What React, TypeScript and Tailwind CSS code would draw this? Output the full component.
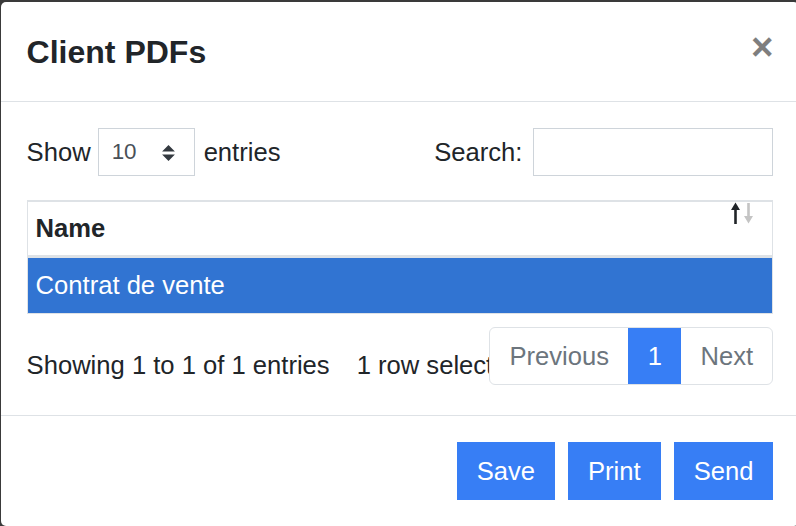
import React from "react";

export default function App() {
  const font = { fontFamily: '"Liberation Sans", Arial, Helvetica, sans-serif' };
  return (
    <div className="h-[526px] w-[796px] overflow-hidden bg-[#3a3a3a]" style={font}>
      <div className="ml-[1px] mt-[2px] w-[798px] h-[524px] rounded-[5px] bg-white text-[#212529] flex flex-col">
        {/* Header */}
        <div className="flex items-start justify-between px-[25.6px] py-[25.6px] border-b border-[#dee2e6]">
          <h5 className="m-0 text-[32px] font-bold leading-[48px]">Client PDFs</h5>
          <button className="text-[38.4px] font-bold leading-none text-black opacity-50" aria-label="Close">
            ×
          </button>
        </div>

        {/* Body */}
        <div className="px-[25.6px] pt-[25.6px] pb-[30px] border-b border-[#dee2e6]">
          <div className="flex items-center justify-between h-[48px]">
            <div className="flex items-center text-[25.6px] leading-[38.4px]">
              <span>Show</span>
              <div className="ml-[7px] mr-[9px] relative flex items-center w-[97px] h-[48px] border border-[#ced4da] bg-white pl-[13px] text-[22.4px] text-[#495057]">
                <span>10</span>
                <svg className="absolute right-[19px] top-[16px]" width="13" height="16" viewBox="0 0 4 5">
                  <path d="M2 0L0 2h4zm0 5L0 3h4z" fill="#343a40" />
                </svg>
              </div>
              <span>entries</span>
            </div>
            <div className="flex items-center text-[25.6px] leading-[38.4px]">
              <span>Search:</span>
              <div className="ml-[11px] w-[240px] h-[48px] border border-[#ced4da] bg-white"></div>
            </div>
          </div>

          {/* Table */}
          <div className="mt-[24px] border-x border-t-2 border-b border-[#dee2e6] text-[25.6px] leading-[38.4px]">
            <div className="relative h-[56px] flex items-center pl-[8px] font-bold border-b-[3px] border-[#dee2e6]">
              Name
              <svg className="absolute right-[16px] top-[0px]" width="26" height="22" viewBox="0 0 26 22">
                <path d="M5.5 22V6" stroke="#212529" strokeWidth="2.6" />
                <path d="M5.5 0.5L1 8H10Z" fill="#212529" />
                <path d="M18.5 1V16" stroke="#c4c4c4" strokeWidth="2.6" />
                <path d="M18.5 21.5L14 14H23Z" fill="#c4c4c4" />
              </svg>
            </div>
            <div className="h-[55px] flex items-center pl-[8px] bg-[#3174d2] text-white">
              Contrat de vente
            </div>
          </div>

          {/* Info + pagination */}
          <div className="mt-[13px] flex items-start">
            <div className="flex-1 min-w-0 overflow-hidden whitespace-nowrap pt-[19px] text-[25.6px] leading-[38.4px]">
              Showing 1 to 1 of 1 entries<span className="ml-[27px]">1 row selected</span>
            </div>
            <div className="shrink-0 flex h-[58px] rounded-[6px] border border-[#dee2e6] bg-white text-[25.6px] overflow-hidden">
              <div className="flex items-center px-[19.3px] text-[#6c757d]">Previous</div>
              <div className="flex items-center px-[19.3px] bg-[#377ef5] text-white">1</div>
              <div className="flex items-center px-[19.3px] text-[#6c757d]">Next</div>
            </div>
          </div>
        </div>

        {/* Footer */}
        <div className="flex justify-end gap-[13px] px-[25.6px] pt-[26px] text-[25.6px]">
          <button className="h-[58px] px-[20px] bg-[#377ef5] text-white">Save</button>
          <button className="h-[58px] px-[20px] bg-[#377ef5] text-white">Print</button>
          <button className="h-[58px] px-[20px] bg-[#377ef5] text-white">Send</button>
        </div>
      </div>
    </div>
  );
}
